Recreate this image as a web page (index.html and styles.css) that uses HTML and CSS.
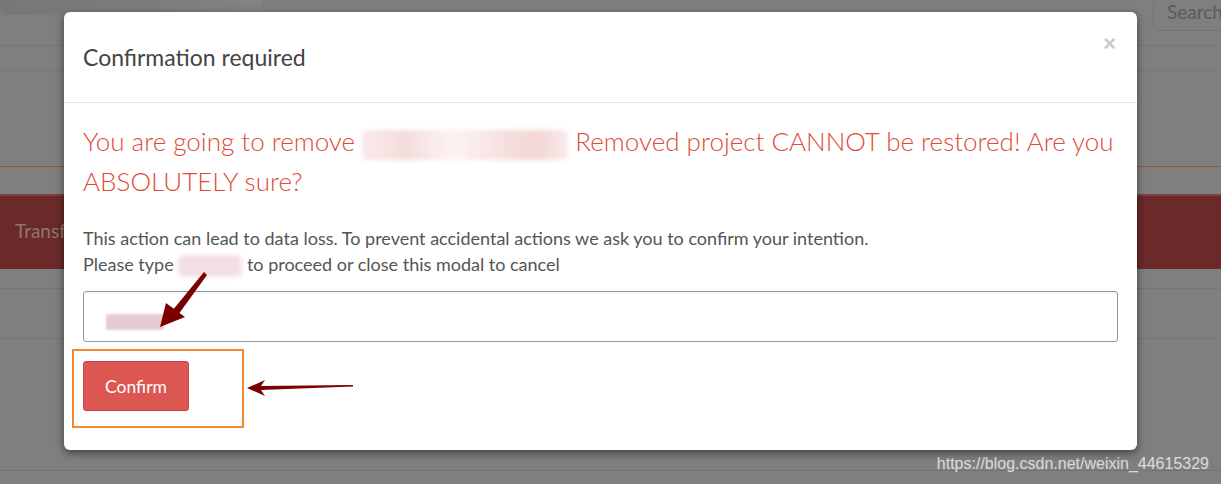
FILE: index.html
```html
<!DOCTYPE html>
<html lang="en">
<head>
  <meta charset="UTF-8" />
  <title>Confirmation required</title>
  <link rel="stylesheet" href="styles.css">
</head>
<body>

<div class="page">
  <div class="topbar">
    <div class="crumb-blur"></div>
    <div class="search">Search</div>
  </div>
  <div class="row row-a"></div>
  <div class="row row-b"></div>
  <div class="danger-band">Transfer project</div>
  <div class="row row-c"></div>
  <div class="row row-d"></div>
  <div class="row row-e"></div>
  <div class="watermark">https://blog.csdn.net/weixin_44615329</div>
</div>

<div class="modal">
  <div class="modal-header">
    <h4>Confirmation required</h4>
    <span class="close">&times;</span>
  </div>
  <div class="modal-body">
    <h3 class="warn">You are going to remove <span class="redact wide"></span> Removed project CANNOT be restored! Are you ABSOLUTELY sure?</h3>
    <p class="hint">This action can lead to data loss. To prevent accidental actions we ask you to confirm your intention.<br>
      Please type <span class="redact short"></span> to proceed or close this modal to cancel</p>
    <div class="input"><span class="redact typed"></span></div>
    <div class="actions">
      <button class="btn-danger">Confirm</button>
    </div>
  </div>
</div>

<!-- screenshot annotations -->
<div class="mark-box"></div>
<svg class="mark-arrow arrow-down" width="70" height="60" viewBox="0 0 70 60">
  <path d="M52 2 L20 41 L26 45 L55 5 Z" fill="#7a0000"/>
  <path d="M8 57 L14 33 L33 47 Z" fill="#7a0000"/>
</svg>
<svg class="mark-arrow arrow-left" width="110" height="20" viewBox="0 0 110 20">
  <path d="M0 10 L18 2 L14 8 L106 7 L106 8.5 L14 12 L18 18 Z" fill="#7a0000"/>
</svg>

</body>
</html>
```

FILE: styles.css
```css
* { box-sizing: border-box; }

body {
  margin: 0;
  width: 1221px;
  height: 484px;
  overflow: hidden;
  background: #7f7f7f;
  font-family: "Source Sans Pro", Lato, "Noto Sans", sans-serif;
}

/* dimmed page behind the modal */
.page {
  display: flex;
  flex-direction: column;
  height: 484px;
}
.topbar {
  display: flex;
  justify-content: space-between;
  height: 46px;
  border-bottom: 1px solid #767676;
}
.crumb-blur {
  width: 262px;
  height: 15px;
  background: linear-gradient(90deg, #777 0, #7a7a7a 30%, #7d7d7d 60%, #838383 100%);
  border-radius: 0 0 8px 8px;
}
.search {
  width: 68px;
  height: 32px;
  margin-top: -1px;
  border: 1px solid #737373;
  border-radius: 4px 0 0 4px;
  border-right: none;
  padding: 0 0 0 13px;
  font-size: 19px;
  line-height: 24px;
  color: #5a5a5a;
}
.row { border-bottom: 1px solid #767676; }
.row-a { height: 25px; }
.row-b { height: 96px; border-bottom: 1px solid #8a5a3a; }
.danger-band {
  height: 102px;
  border-top: 27px solid #7f7f7f;
  box-shadow: inset 0 2px 0 #7e3f3f;
  background: #6b2929;
  padding: 25px 15px;
  font-size: 19px;
  color: #8c7676;
}
.row-c { height: 20px; }
.row-d { height: 50px; }
.row-e { height: 132px; border-bottom-color: #737373; }
.watermark {
  position: absolute;
  right: 12px;
  top: 455px;
  font-family: "Liberation Sans", Arial, sans-serif;
  font-size: 16px;
  color: #d8d8d8;
  text-shadow: 0 0 1px #999;
}

/* modal */
.modal {
  position: absolute;
  left: 64px;
  top: 12px;
  width: 1073px;
  height: 438px;
  background: #fff;
  border-radius: 6px;
  box-shadow: 0 3px 9px rgba(0, 0, 0, 0.5);
}
.modal-header {
  display: flex;
  justify-content: space-between;
  align-items: flex-start;
  height: 91px;
  padding: 30px 20px 0 19px;
  border-bottom: 1px solid #e5e5e5;
}
.modal-header h4 {
  margin: 0;
  font-size: 23px;
  font-weight: 400;
  color: #444;
  line-height: 30px;
}
.close {
  font-family: "Liberation Sans", Arial, sans-serif;
  font-size: 22px;
  font-weight: 700;
  color: #cacaca;
  line-height: 20px;
  margin-top: -8px;
  margin-right: 1px;
}
.modal-body {
  padding: 18px 19px 0 19px;
}
.warn {
  margin: 0;
  font-size: 26px;
  font-weight: 300;
  line-height: 40px;
  color: #dd4b39;
}
.hint {
  margin: 24px 0 14px;
  font-size: 18px;
  line-height: 26px;
  color: #555;
}
.redact {
  display: inline-block;
  vertical-align: middle;
  border-radius: 6px;
  filter: blur(2px);
}
.redact.wide {
  width: 206px;
  height: 30px;
  background: linear-gradient(90deg, #faeaea, #f5dcdc 20%, #fdf3f3 45%, #f6dede 70%, #f4d6d6 85%, #fbeaea);
}
.redact.short {
  width: 64px;
  height: 22px;
  background: #f3dfe3;
}
.redact.typed {
  width: 58px;
  height: 16px;
  margin-top: 22px;
  background: #e2cdd1;
  border-radius: 2px;
  filter: blur(1px);
}
.input {
  height: 51px;
  border: 1px solid #8c9aab;
  border-radius: 3px;
  box-shadow: inset 0 1px 2px rgba(0, 0, 0, 0.06);
  padding: 0 22px;
}
.actions {
  padding-top: 19px;
}
.btn-danger {
  width: 106px;
  height: 50px;
  background: #dd5752;
  border: 1px solid #c9433f;
  border-radius: 3px;
  color: #fff;
  font-family: inherit;
  font-size: 17.5px;
}

/* annotations drawn over the screenshot */
.mark-box {
  position: absolute;
  left: 72px;
  top: 349px;
  width: 172px;
  height: 79px;
  border: 2px solid #f28a35;
}
.mark-arrow { position: absolute; }
.arrow-down { left: 152px; top: 270px; }
.arrow-left { left: 247px; top: 378px; }
```
